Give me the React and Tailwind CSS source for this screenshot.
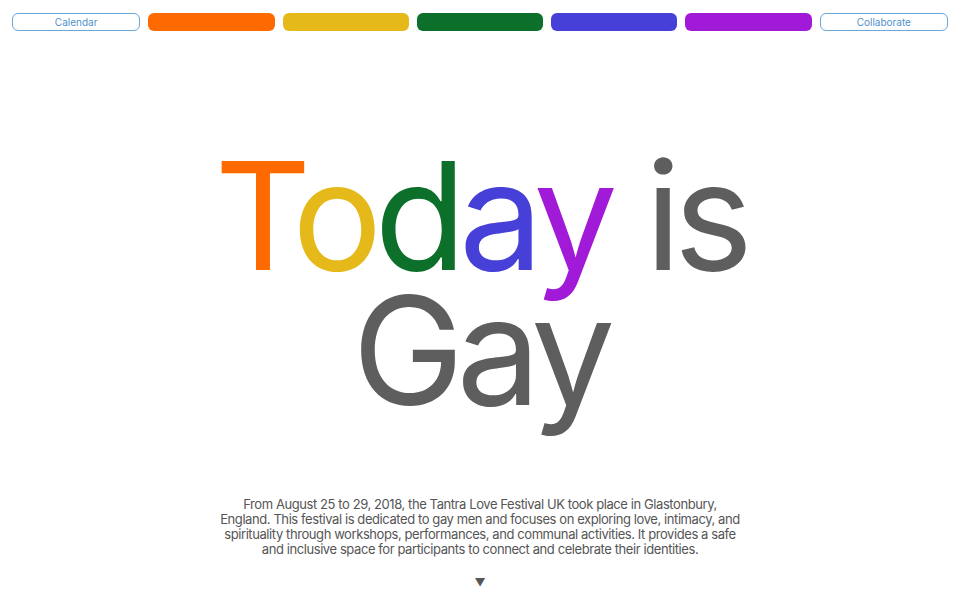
import React from "react";

const navItems = [
  { label: "Calendar", cls: "border border-[#6aa6d8] bg-white text-[#4f92cc]" },
  { label: "", cls: "bg-[#ff6a00]" },
  { label: "", cls: "bg-[#e6b91a]" },
  { label: "", cls: "bg-[#0c6f2a]" },
  { label: "", cls: "bg-[#4740d8]" },
  { label: "", cls: "bg-[#a01ad8]" },
  { label: "Collaborate", cls: "border border-[#6aa6d8] bg-white text-[#4f92cc]" },
];

const App = () => {
  return (
    <div className="w-[960px] h-[600px] bg-white overflow-hidden font-['Inter',sans-serif]">
      {/* top bar */}
      <nav className="flex gap-2 px-3 pt-[13px]">
        {navItems.map((item, i) => (
          <button
            key={i}
            className={`flex-1 h-[18px] rounded-md text-[10px] leading-none flex items-center justify-center ${item.cls}`}
          >
            {item.label}
          </button>
        ))}
      </nav>

      {/* headline */}
      <h1 className="mt-[117px] text-center text-[150px] leading-[135px] font-normal tracking-[-0.05em] text-[#5e5e5e]">
        <span className="text-[#ff6a00]">T</span>
        <span className="text-[#e6b91a]">o</span>
        <span className="text-[#0c6f2a]">d</span>
        <span className="text-[#4740d8]">a</span>
        <span className="text-[#a01ad8]">y</span> is
        <br />
        Gay
      </h1>

      {/* description */}
      <p className="mx-auto mt-[79px] max-w-[526px] text-center text-[13px] leading-[15px] tracking-[-0.032em] text-[#555555]">
        From August 25 to 29, 2018, the Tantra Love Festival UK took place in
        Glastonbury, England. This festival is dedicated to gay men and focuses
        on exploring love, intimacy, and spirituality through workshops,
        performances, and communal activities. It provides a safe and inclusive
        space for participants to connect and celebrate their identities.
      </p>

      <div className="mt-[20px] text-center text-[11px] leading-none text-[#555555]">▼</div>
    </div>
  );
};

export default App;
